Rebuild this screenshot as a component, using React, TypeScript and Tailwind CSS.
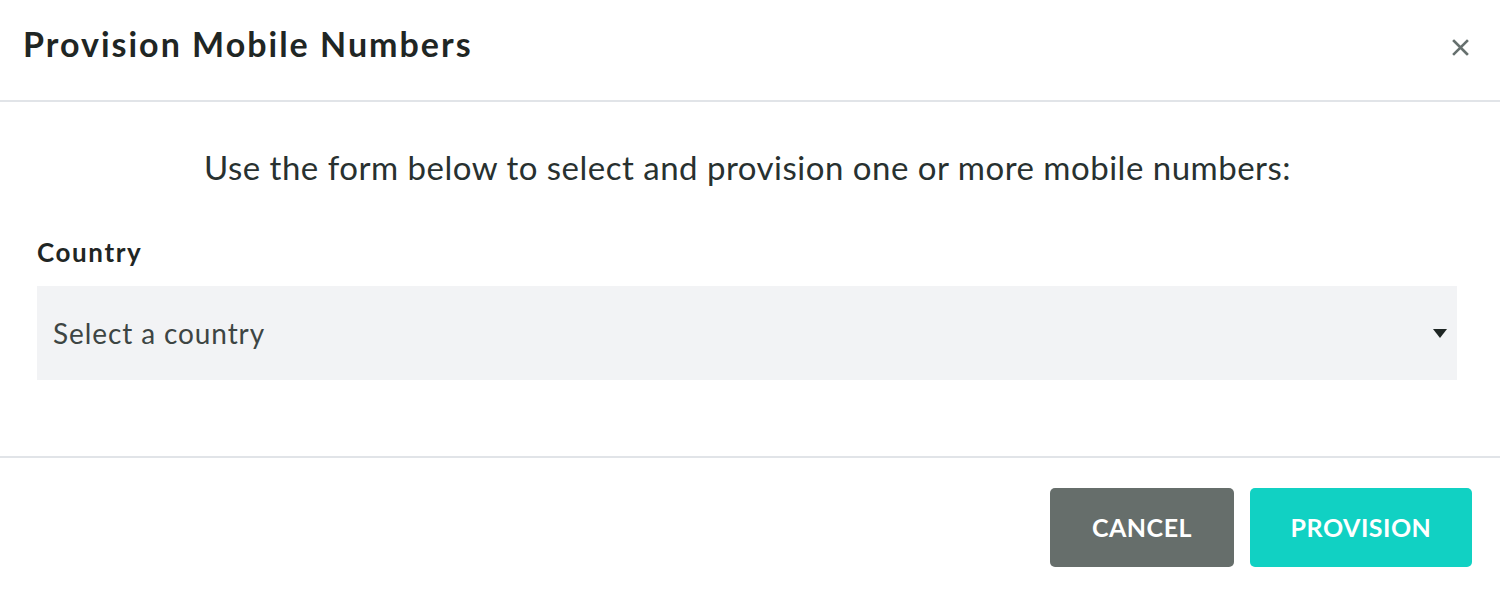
import React from "react";

export default function App() {
  return (
    <div className="w-[1500px] h-[593px] bg-white flex flex-col text-[#1f2624]" style={{ fontFamily: "Lato, 'Noto Sans', sans-serif" }}>
      <div className="h-[102px] flex items-center justify-between pl-[23px] pr-[31px] border-b-2 border-[#e1e4e8] shrink-0">
        <h1 className="text-[34px] font-bold tracking-[2px] leading-[40px] text-[#1f2624] -mt-[12px]">Provision Mobile Numbers</h1>
        <button className="-mt-[6px]" aria-label="Close">
          <svg width="17" height="17" viewBox="0 0 17 17">
            <path d="M2 2 L15 15 M15 2 L2 15" stroke="#66706e" strokeWidth="2.6" strokeLinecap="square" />
          </svg>
        </button>
      </div>
      <div className="h-[356px] border-b-2 border-[#e1e4e8] px-[37px] pt-[45px] flex flex-col shrink-0">
        <p className="text-center text-[33px] leading-[40px] tracking-[0.5px] text-[#283130] pr-[5px]">Use the form below to select and provision one or more mobile numbers:</p>
        <label className="mt-[48px] text-[26px] font-bold leading-[34px] tracking-[1.6px] text-[#1f2624]">Country</label>
        <div className="mt-[17px] h-[94px] w-[1420px] bg-[#f2f3f5] flex items-center justify-between pl-[16px] pr-[10px]">
          <span className="text-[28px] tracking-[0.9px] text-[#3d4543]">Select a country</span>
          <svg width="14" height="9" viewBox="0 0 14 9">
            <path d="M0 0 H14 L7 9 Z" fill="#1f2624" />
          </svg>
        </div>
      </div>
      <div className="flex justify-end items-start gap-[16px] pr-[28px] pt-[30px]">
        <button className="w-[184px] h-[79px] rounded-[5px] bg-[#666e6b] text-white text-[25px] font-bold tracking-[0.5px]">CANCEL</button>
        <button className="w-[222px] h-[79px] rounded-[5px] bg-[#11d1c3] text-white text-[25px] font-bold tracking-[0.5px]">PROVISION</button>
      </div>
    </div>
  );
}
